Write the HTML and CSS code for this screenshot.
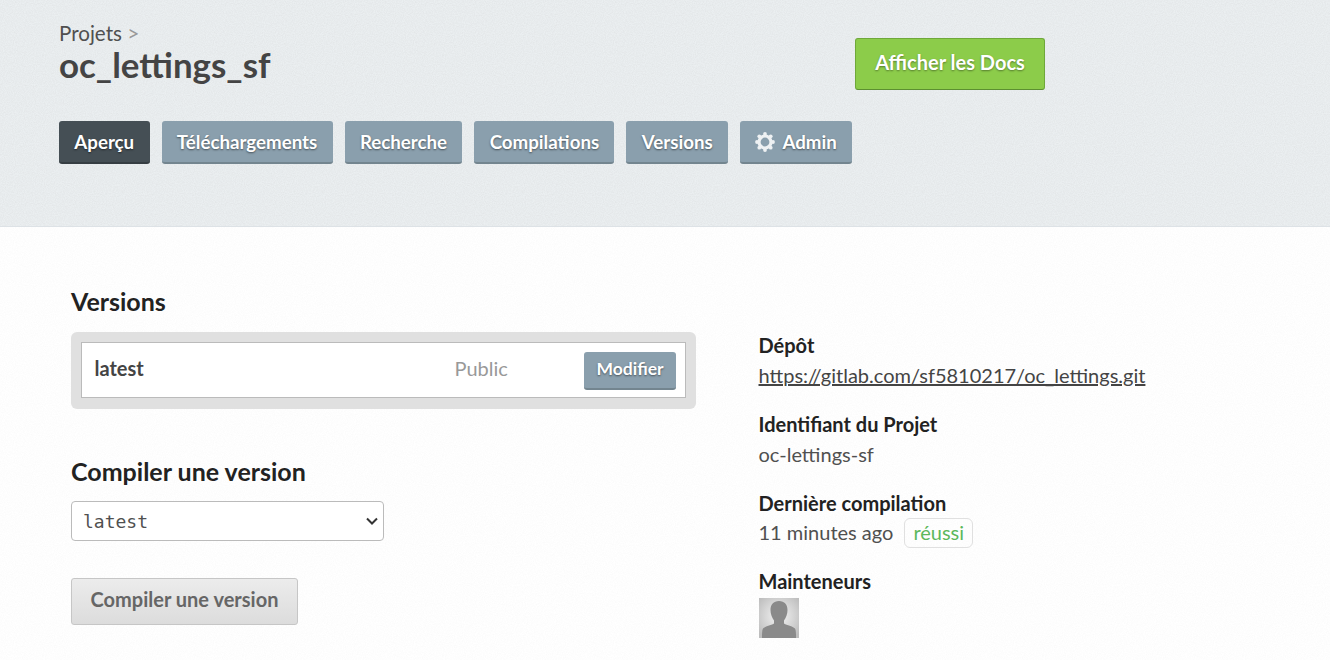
FILE: index.html
```html
<!DOCTYPE html>
<html lang="fr">
<head>
  <meta charset="UTF-8" />
  <meta name="viewport" content="width=device-width, initial-scale=1.0" />
  <title>oc_lettings_sf</title>
  <link rel="stylesheet" href="styles.css">
</head>
<body>
  <header class="project-header">
    <div class="title-row">
      <div class="title-block">
        <div class="breadcrumb"><a href="#">Projets</a> <span class="crumb-sep">&gt;</span></div>
        <h1>oc_lettings_sf</h1>
      </div>
      <a class="btn-docs" href="#">Afficher les Docs</a>
    </div>
    <nav class="project-nav">
      <a class="nav-btn active" href="#">Aperçu</a>
      <a class="nav-btn" href="#">Téléchargements</a>
      <a class="nav-btn" href="#">Recherche</a>
      <a class="nav-btn" href="#">Compilations</a>
      <a class="nav-btn" href="#">Versions</a>
      <a class="nav-btn" href="#">
        <svg class="gear" viewBox="0 0 20 20" width="20" height="20" aria-hidden="true">
          <circle cx="10" cy="10" r="6" fill="none" stroke="#eef1f3" stroke-width="3.2"/>
          <g fill="#eef1f3">
            <circle cx="10" cy="2" r="1.9"/>
            <circle cx="10" cy="18" r="1.9"/>
            <circle cx="2" cy="10" r="1.9"/>
            <circle cx="18" cy="10" r="1.9"/>
            <circle cx="4.3" cy="4.3" r="1.9"/>
            <circle cx="15.700" cy="4.300" r="1.9"/>
            <circle cx="4.3" cy="15.700" r="1.9"/>
            <circle cx="15.700" cy="15.700" r="1.9"/>
          </g>
        </svg>
        Admin
      </a>
    </nav>
  </header>

  <main class="content">
    <section class="col-main">
      <h2>Versions</h2>
      <div class="version-panel">
        <div class="version-row">
          <span class="version-name">latest</span>
          <span class="version-state">Public</span>
          <a class="btn-edit" href="#">Modifier</a>
        </div>
      </div>

      <h2 class="build-title">Compiler une version</h2>
      <form class="build-form">
        <select class="build-select">
          <option>latest</option>
        </select>
        <button class="btn-build" type="button">Compiler une version</button>
      </form>
    </section>

    <aside class="col-side">
      <div class="info-block">
        <h3>Dépôt</h3>
        <a class="repo-link" href="#">https://gitlab.com/sf5810217/oc_lettings.git</a>
      </div>
      <div class="info-block">
        <h3>Identifiant du Projet</h3>
        <div>oc-lettings-sf</div>
      </div>
      <div class="info-block">
        <h3>Dernière compilation</h3>
        <div class="build-status">11 minutes ago <span class="badge-ok">réussi</span></div>
      </div>
      <div class="info-block">
        <h3>Mainteneurs</h3>
        <svg class="avatar" viewBox="0 0 40 40" width="40" height="40" aria-hidden="true">
          <defs>
            <radialGradient id="avatar-bg" cx="50%" cy="45%" r="65%">
              <stop offset="0.3" stop-color="#e4e4e4"/>
              <stop offset="1" stop-color="#bdbdbd"/>
            </radialGradient>
          </defs>
          <rect width="40" height="40" fill="url(#avatar-bg)"/>
          <path fill="#8a8a8a" d="M20 3c-5.500 0-8.500 3.500-8.500 9 0 4 1.500 8 3.500 10.500v3c-3 2-8.500 2.500-11 5-1 1.500-1 5-1 9.500h34c0-4.500 0-8-1-9.500-2.500-2.500-8-3-11-5v-3c2-2.500 3.500-6.500 3.500-10.500 0-5.500-3-9-8.500-9z"/>
        </svg>
      </div>
    </aside>
  </main>
</body>
</html>
```

FILE: styles.css
```css
* {
  box-sizing: border-box;
}

body {
  margin: 0;
  font-family: Lato, sans-serif;
  font-size: 20px;
  color: #505050;
  background-color: #fff;
  background-image: url("data:image/svg+xml,%3Csvg xmlns='http://www.w3.org/2000/svg' width='200' height='200'%3E%3Cfilter id='n'%3E%3CfeTurbulence type='fractalNoise' baseFrequency='0.9' numOctaves='2'/%3E%3CfeColorMatrix values='0 0 0 0 0.5 0 0 0 0 0.5 0 0 0 0 0.5 0.12 0 0 0 -0.035'/%3E%3C/filter%3E%3Crect width='200' height='200' filter='url(%23n)'/%3E%3C/svg%3E");
}

a {
  color: inherit;
  text-decoration: none;
}

h1, h2, h3 {
  margin: 0;
}

.project-header {
  height: 227px;
  padding: 20px 0 0 59px;
  background-color: #ebeff1;
  background-image: url("data:image/svg+xml,%3Csvg xmlns='http://www.w3.org/2000/svg' width='200' height='200'%3E%3Cfilter id='n'%3E%3CfeTurbulence type='fractalNoise' baseFrequency='0.9' numOctaves='2'/%3E%3CfeColorMatrix values='0 0 0 0 0.5 0 0 0 0 0.5 0 0 0 0 0.5 0.3 0 0 0 -0.08'/%3E%3C/filter%3E%3Crect width='200' height='200' filter='url(%23n)'/%3E%3C/svg%3E");
  border-bottom: 1px solid #dde2e6;
}

.title-row {
  display: flex;
  align-items: flex-start;
  height: 101px;
}

.title-block {
  width: 796px;
}

.breadcrumb {
  font-size: 20.6px;
  line-height: 26px;
  color: #505050;
}

.crumb-sep {
  color: #999;
  font-size: 21px;
}

h1 {
  font-size: 34.9px;
  line-height: 38px;
  font-weight: 700;
  color: #444;
}

.btn-docs {
  display: block;
  width: 190px;
  height: 52px;
  margin-top: 18px;
  line-height: 46px;
  text-align: center;
  font-size: 20px;
  font-weight: 700;
  color: #fff;
  background-color: #8ccc4a;
  border: 1px solid #6fa83a;
  border-bottom-color: #5c9030;
  border-radius: 3px;
  text-shadow: 0 1px 2px rgba(0,0,0,0.4);
}

.project-nav {
  display: flex;
  gap: 12px;
}

.nav-btn {
  display: flex;
  align-items: center;
  gap: 7px;
  height: 43px;
  padding: 0 15.35px;
  font-size: 18.7px;
  font-weight: 700;
  color: #fff;
  background-color: #8a9fad;
  border-bottom: 2px solid #73858f;
  border-radius: 3px;
  text-shadow: 0 1px 2px rgba(0,0,0,0.5);
}

.nav-btn.active {
  background-color: #454f55;
  border-bottom-color: #363e43;
}

.content {
  display: flex;
  padding: 59px 0 0 71px;
}

.col-main {
  width: 625px;
  margin-right: 62.5px;
}

h2 {
  font-size: 25px;
  line-height: 30px;
  font-weight: 700;
  color: #222;
}

.version-panel {
  margin-top: 16px;
  padding: 10px 10px 11px;
  background-color: #e0e0e0;
  border-radius: 6px;
}

.version-row {
  display: flex;
  align-items: center;
  height: 56px;
  padding: 0 9px 0 12.5px;
  background-color: #fff;
  border: 1px solid #bbb;
}

.version-name {
  width: 360px;
  padding-bottom: 5px;
  font-size: 20px;
  font-weight: 700;
  color: #444;
}

.version-state {
  width: 129.5px;
  padding-bottom: 5px;
  color: #999;
}

.btn-edit {
  width: 92px;
  height: 38px;
  margin-top: 2px;
  line-height: 34px;
  text-align: center;
  font-size: 17.5px;
  font-weight: 700;
  color: #fff;
  background-color: #8a9fad;
  border-bottom: 2px solid #73858f;
  border-radius: 3px;
  text-shadow: 0 1px 2px rgba(0,0,0,0.5);
}

.build-title {
  margin-top: 47px;
}

.build-form {
  display: flex;
  flex-direction: column;
  align-items: flex-start;
  margin-top: 15px;
}

.build-select {
  width: 313px;
  height: 40px;
  padding: 0 11px;
  appearance: none;
  font-family: "DejaVu Sans Mono", monospace;
  font-size: 18px;
  color: #505050;
  background: #fff url("data:image/svg+xml,%3Csvg xmlns='http://www.w3.org/2000/svg' width='14' height='9'%3E%3Cpath d='M2 1.500l5 5 5-5' fill='none' stroke='%23333' stroke-width='2'/%3E%3C/svg%3E") no-repeat right 4px center;
  border: 1px solid #bbb;
  border-radius: 4px;
}

.btn-build {
  width: 227px;
  height: 47px;
  margin-top: 37px;
  padding-bottom: 7px;
  font-family: inherit;
  font-size: 20px;
  font-weight: 700;
  color: #666;
  background: linear-gradient(#ececec, #dcdcdc);
  border: 1px solid #c6c6c6;
  border-radius: 3px;
}

.col-side {
  width: 500px;
  padding-top: 44px;
}

h3 {
  font-size: 20px;
  line-height: 30px;
  font-weight: 700;
  color: #222;
}

.info-block {
  margin-bottom: 19px;
  line-height: 30px;
}

.repo-link {
  text-decoration: underline;
  color: #444;
}

.build-status {
  display: flex;
  align-items: center;
  gap: 11px;
  height: 30px;
  margin: -1px 0 1px;
}

.badge-ok {
  margin-top: 2px;
  padding: 0 8px 2px;
  line-height: 26px;
  color: #5cb85c;
  border: 1px solid #e0e0e0;
  border-radius: 6px;
}

.avatar {
  display: block;
  margin-top: 2px;
}
```
